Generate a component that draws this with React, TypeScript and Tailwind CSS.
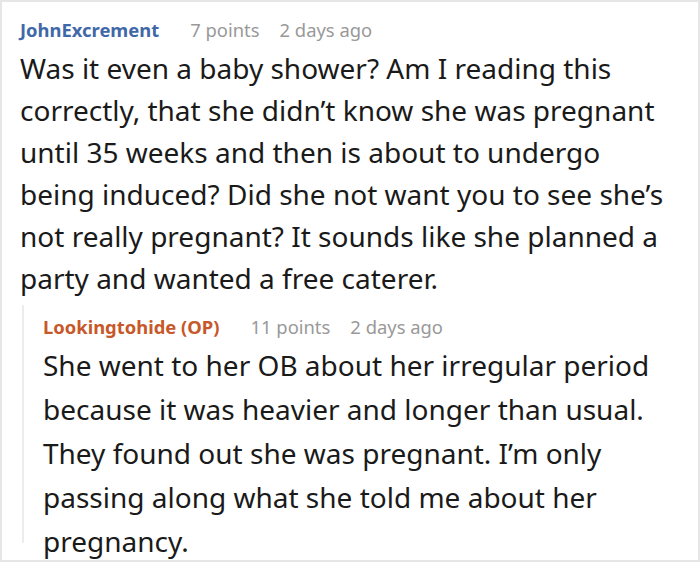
export default function App() {
  return (
    <div className="w-[700px] h-[562px] bg-white border-2 border-[#e6e6e6] overflow-hidden" style={{ fontFamily: '"Noto Sans", "Open Sans", sans-serif' }}>
      <div className="pl-[18px] pt-[16px]">
        <div className="flex items-baseline gap-[20px] text-[18.4px] leading-[24px]">
          <span className="font-bold text-[#3f68a8] mr-[11px]">JohnExcrement</span>
          <span className="text-[#999999]">7 points</span>
          <span className="text-[#999999]">2 days ago</span>
        </div>
        <p className="mt-[5px] w-[661px] text-[28px] leading-[42px] text-[#1a1a1a]">
          Was it even a baby shower? Am I reading this correctly, that she didn’t know she was pregnant until 35 weeks and then is about to undergo being induced? Did she not want you to see she’s not really pregnant? It sounds like she planned a party and wanted a free caterer.
        </p>
        <div className="mt-[6px] flex">
          <div className="w-[2px] h-[238px] bg-[#ececec] ml-[2px] shrink-0" />
          <div className="pl-[19px] pt-[10px]">
            <div className="flex items-baseline gap-[20px] text-[18.4px] leading-[24px]">
              <span className="font-bold text-[#c7582a] mr-[11px]">Lookingtohide (OP)</span>
              <span className="text-[#999999]">11 points</span>
              <span className="text-[#999999]">2 days ago</span>
            </div>
            <p className="mt-[4px] text-[28px] leading-[44px] text-[#1a1a1a]">
              She went to her OB about her irregular period because it was heavier and longer than usual. They found out she was pregnant. I’m only passing along what she told me about her pregnancy.
            </p>
          </div>
        </div>
      </div>
    </div>
  );
}
